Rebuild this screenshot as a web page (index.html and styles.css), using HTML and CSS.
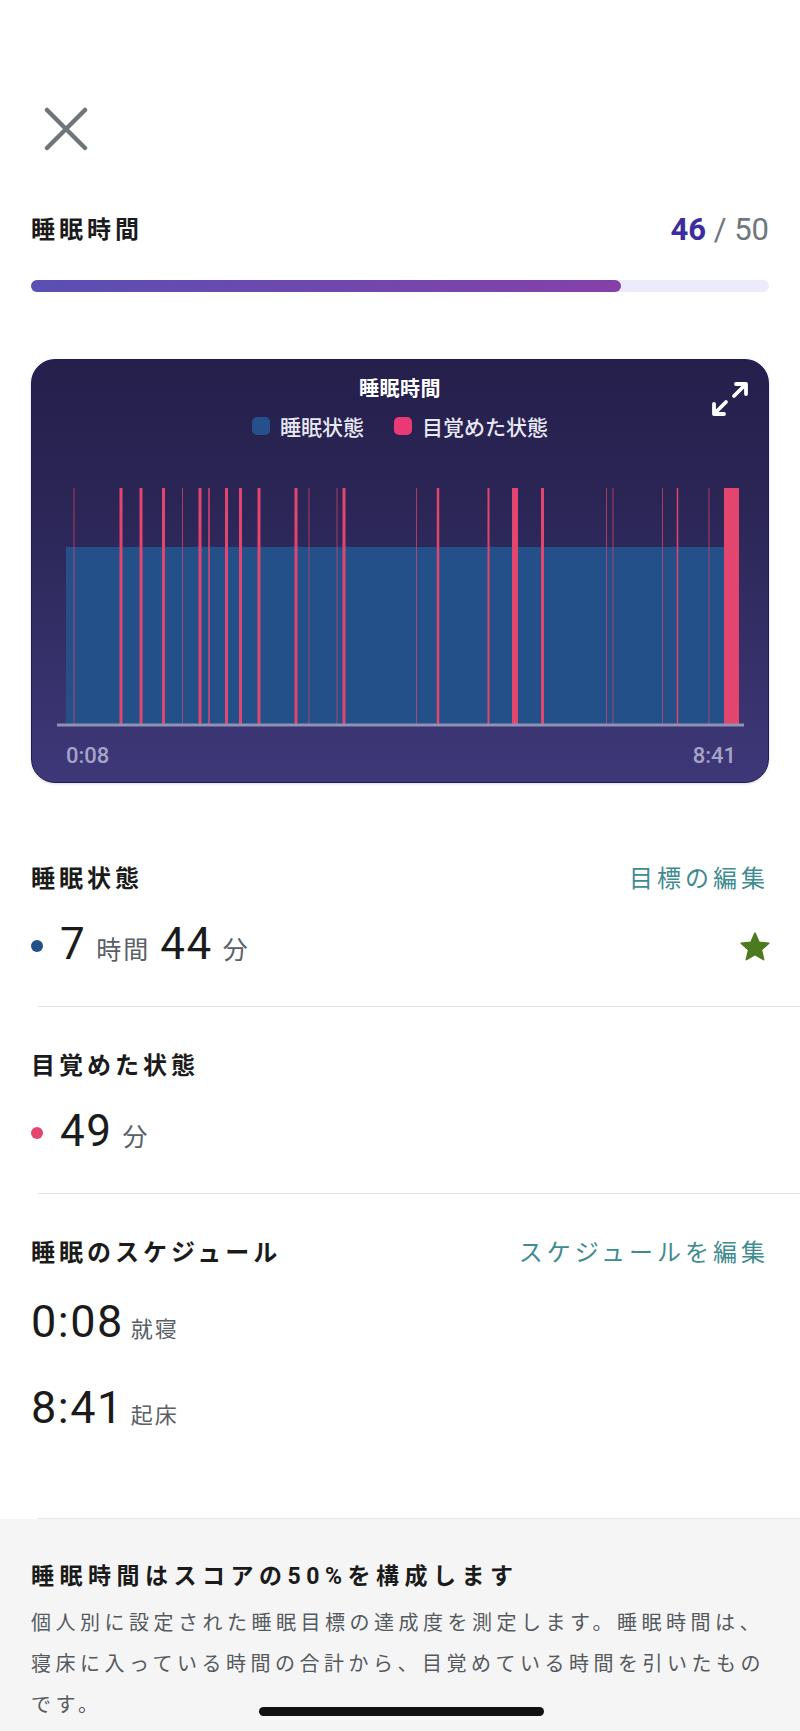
FILE: index.html
```html
<!DOCTYPE html>
<html lang="ja">
<head>
    <meta charset="UTF-8">
    <meta name="viewport" content="width=device-width, initial-scale=1.0">
    <title>睡眠時間</title>
    <link rel="stylesheet" href="styles.css">
</head>
<body>

    <main class="sheet">
        <div class="top">
            <button class="close-btn" aria-label="閉じる">
                <svg width="44" height="44" viewBox="0 0 44 44">
                    <path d="M3 3 L41 41 M41 3 L3 41" stroke="#6e767b" stroke-width="4.5" stroke-linecap="round" fill="none"/>
                </svg>
            </button>

            <div class="score-row">
                <h1 class="title">睡眠時間</h1>
                <div class="score"><b>46</b> / 50</div>
            </div>

            <div class="progress"><div class="progress-fill" style="width: 80%"></div></div>

            <div class="chart-card">
                <div class="chart-title">睡眠時間</div>
                <div class="legend">
                    <span class="legend-item"><i class="swatch asleep"></i>睡眠状態</span>
                    <span class="legend-item"><i class="swatch awake"></i>目覚めた状態</span>
                </div>
                <svg class="expand" width="38" height="36" viewBox="0 0 38 36">
                    <g stroke="#fff" stroke-width="3.8" stroke-linecap="round" stroke-linejoin="round" fill="none">
                        <path d="M23 15 L35 3 M25 3 L35 3 L35 13"/>
                        <path d="M15 21 L3 33 M3 23 L3 33 L13 33"/>
                    </g>
                </svg>

                <svg class="chart" width="738" height="250" viewBox="0 0 738 250">
                    <rect x="35" y="69" width="658" height="178" fill="#245089"/>
                    <g stroke="#e2456e" fill="none">
                        <line x1="43" y1="10" x2="43" y2="247" stroke-width="1" opacity=".7"/>
                        <line x1="90" y1="10" x2="90" y2="247" stroke-width="3"/>
                        <line x1="110" y1="10" x2="110" y2="247" stroke-width="3"/>
                        <line x1="132.5" y1="10" x2="132.5" y2="247" stroke-width="3"/>
                        <line x1="151.5" y1="10" x2="151.5" y2="247" stroke-width="1" opacity=".7"/>
                        <line x1="169" y1="10" x2="169" y2="247" stroke-width="3"/>
                        <line x1="178" y1="10" x2="178" y2="247" stroke-width="1.5"/>
                        <line x1="195.5" y1="10" x2="195.5" y2="247" stroke-width="3"/>
                        <line x1="209.5" y1="10" x2="209.5" y2="247" stroke-width="3"/>
                        <line x1="228" y1="10" x2="228" y2="247" stroke-width="3"/>
                        <line x1="265" y1="10" x2="265" y2="247" stroke-width="3"/>
                        <line x1="278" y1="10" x2="278" y2="247" stroke-width="1" opacity=".7"/>
                        <line x1="306" y1="10" x2="306" y2="247" stroke-width="1" opacity=".7"/>
                        <line x1="313" y1="10" x2="313" y2="247" stroke-width="3"/>
                        <line x1="385.5" y1="10" x2="385.5" y2="247" stroke-width="1" opacity=".7"/>
                        <line x1="407" y1="10" x2="407" y2="247" stroke-width="2.5"/>
                        <line x1="457.5" y1="10" x2="457.5" y2="247" stroke-width="2"/>
                        <line x1="484" y1="10" x2="484" y2="247" stroke-width="6"/>
                        <line x1="511.5" y1="10" x2="511.5" y2="247" stroke-width="3"/>
                        <line x1="575.5" y1="10" x2="575.5" y2="247" stroke-width="1" opacity=".7"/>
                        <line x1="582" y1="10" x2="582" y2="247" stroke-width="1" opacity=".7"/>
                        <line x1="631.5" y1="10" x2="631.5" y2="247" stroke-width="1" opacity=".7"/>
                        <line x1="646.5" y1="10" x2="646.5" y2="247" stroke-width="1.5"/>
                        <line x1="678" y1="10" x2="678" y2="247" stroke-width="1" opacity=".7"/>
                    </g>
                    <rect x="693" y="10" width="15" height="237" fill="#e2456e"/>
                    <line x1="26" y1="247" x2="713" y2="247" stroke="#8f92b5" stroke-width="3"/>
                </svg>

                <div class="chart-axis">
                    <span>0:08</span>
                    <span>8:41</span>
                </div>
            </div>
        </div>

        <section class="stat first">
            <div class="stat-head">
                <h2 class="title">睡眠状態</h2>
                <a href="#" class="link">目標の編集</a>
            </div>
            <div class="stat-value">
                <i class="dot asleep"></i>
                <span class="amount">7<span class="unit">時間</span>44<span class="unit">分</span></span>
                <svg class="star" width="32" height="31" viewBox="0 0 30 29">
                    <path d="M15 2 L18.8 10.6 L28 11.4 L21 17.6 L23.1 26.8 L15 22 L6.9 26.8 L9 17.6 L2 11.4 L11.2 10.6 Z" fill="#4e7a1f" stroke="#4e7a1f" stroke-width="1.5" stroke-linejoin="round"/>
                </svg>
            </div>
        </section>

        <section class="stat">
            <div class="stat-head">
                <h2 class="title">目覚めた状態</h2>
            </div>
            <div class="stat-value">
                <i class="dot awake"></i>
                <span class="amount">49<span class="unit">分</span></span>
            </div>
        </section>

        <section class="stat schedule">
            <div class="stat-head">
                <h2 class="title">睡眠のスケジュール</h2>
                <a href="#" class="link">スケジュールを編集</a>
            </div>
            <div class="time-row">0:08<span class="time-label">就寝</span></div>
            <div class="time-row">8:41<span class="time-label">起床</span></div>
        </section>

        <section class="info">
            <h3 class="info-title">睡眠時間はスコアの50%を構成します</h3>
            <p class="info-text">個人別に設定された睡眠目標の達成度を測定します。睡眠時間は、寝床に入っている時間の合計から、目覚めている時間を引いたものです。</p>
        </section>
    </main>

    <div class="home-bar"></div>

</body>
</html>
```

FILE: styles.css
```css
:root {
    --ink: #1b1b1b;
    --muted: #5a6065;
    --teal: #3e8b90;
    --asleep: #245089;
    --awake: #e2456e;
    --line: #e6e6e6;
}

* {
    margin: 0;
    padding: 0;
    box-sizing: border-box;
}

body {
    position: relative;
    width: 800px;
    height: 1731px;
    overflow: hidden;
    background-color: #fff;
    color: var(--ink);
    font-family: Roboto, "Noto Sans CJK JP", sans-serif;
}

.top {
    padding: 107px 31px 0;
}

.close-btn {
    display: block;
    width: 44px;
    height: 44px;
    margin-left: 13px;
    background: none;
    border: none;
    cursor: pointer;
}

.close-btn svg {
    display: block;
}

.title {
    font-size: 24px;
    font-weight: 700;
    line-height: 34px;
    letter-spacing: 4px;
    color: var(--ink);
}

.score-row {
    display: flex;
    justify-content: space-between;
    align-items: center;
    margin-top: 62px;
}

.score {
    font-size: 31px;
    line-height: 34px;
    color: #6f777c;
}

.score b {
    color: #3b2d9c;
    font-weight: 700;
}

.progress {
    height: 12px;
    margin-top: 33px;
    border-radius: 6px;
    background-color: #ecebfb;
}

.progress-fill {
    height: 100%;
    border-radius: 6px;
    background: linear-gradient(90deg, #5a4fb2, #8441a8);
}

/* chart card */

.chart-card {
    position: relative;
    margin-top: 67px;
    height: 424px;
    padding-top: 15px;
    border: 1px solid #1f1b5c;
    border-radius: 24px;
    background: linear-gradient(180deg, #241f4b 0%, #2b2656 35%, #3e3879 100%);
    box-shadow: 0 1px 3px rgba(0, 0, 0, 0.15);
    color: #fff;
}

.chart-title {
    text-align: center;
    font-size: 20px;
    font-weight: 700;
    line-height: 26px;
    letter-spacing: 0.5px;
    font-family: "Noto Sans CJK JP", sans-serif;
}

.legend {
    display: flex;
    justify-content: center;
    gap: 30px;
    margin-top: 12px;
    font-size: 21px;
    font-weight: 500;
    line-height: 26px;
    color: #e8e8f2;
    font-family: "Noto Sans CJK JP", sans-serif;
}

.legend-item {
    display: flex;
    align-items: center;
    gap: 10px;
}

.swatch {
    display: block;
    width: 18px;
    height: 18px;
    border-radius: 5px;
}

.swatch.asleep {
    background-color: #26508c;
}

.swatch.awake {
    background-color: #ea3a76;
}

.expand {
    position: absolute;
    top: 21px;
    right: 19px;
}

.chart {
    display: block;
    margin-top: 39px;
    margin-left: -1px;
}

.chart-axis {
    display: flex;
    justify-content: space-between;
    padding: 0 32px 0 34px;
    margin-top: 17px;
    font-size: 22px;
    font-weight: 500;
    line-height: 22px;
    color: #a6a3c8;
}

/* stats */

.stat {
    margin-left: 38px;
    padding: 42px 31px 34px 0;
    border-bottom: 1px solid var(--line);
}

.stat.first {
    padding-top: 79px;
}

.stat.schedule {
    padding-bottom: 79px;
}

.stat-head {
    display: flex;
    justify-content: space-between;
    align-items: center;
    margin-left: -7px;
}

.link {
    font-size: 24px;
    line-height: 34px;
    letter-spacing: 4px;
    color: var(--teal);
    text-decoration: none;
}

.stat-value {
    display: flex;
    align-items: center;
    height: 52px;
    margin-top: 24px;
    margin-left: -7px;
}

.dot {
    display: block;
    width: 12px;
    height: 12px;
    margin-right: 17px;
    border-radius: 50%;
}

.dot.asleep {
    background-color: var(--asleep);
}

.dot.awake {
    background-color: var(--awake);
}

.amount {
    font-size: 44px;
    line-height: 52px;
    letter-spacing: 1.5px;
    color: var(--ink);
}

.unit {
    margin: 0 10px 0 10px;
    font-size: 25px;
    letter-spacing: 2px;
    color: var(--muted);
    font-family: "Noto Sans CJK JP", sans-serif;
}

.star {
    margin-left: auto;
    margin-right: -2px;
}

.time-row {
    margin-top: 26px;
    margin-left: -7px;
    font-size: 45px;
    line-height: 52px;
    letter-spacing: 1.5px;
    color: var(--ink);
}

.time-row + .time-row {
    margin-top: 29px;
}

.time-label {
    margin-left: 7px;
    font-size: 22px;
    letter-spacing: 2px;
    color: var(--muted);
    font-family: "Noto Sans CJK JP", sans-serif;
}

/* info block */

.info {
    height: 214px;
    padding: 41px 31px 0;
    background-color: #f5f5f5;
}

.info-title {
    font-size: 23px;
    font-weight: 700;
    line-height: 34px;
    letter-spacing: 5.5px;
    color: var(--ink);
}

.info-text {
    margin-top: 9px;
    font-size: 20px;
    line-height: 41px;
    letter-spacing: 4.5px;
    color: #555a5e;
}

.home-bar {
    position: absolute;
    left: 259px;
    bottom: 15px;
    width: 285px;
    height: 9px;
    border-radius: 5px;
    background-color: #111;
}
```
